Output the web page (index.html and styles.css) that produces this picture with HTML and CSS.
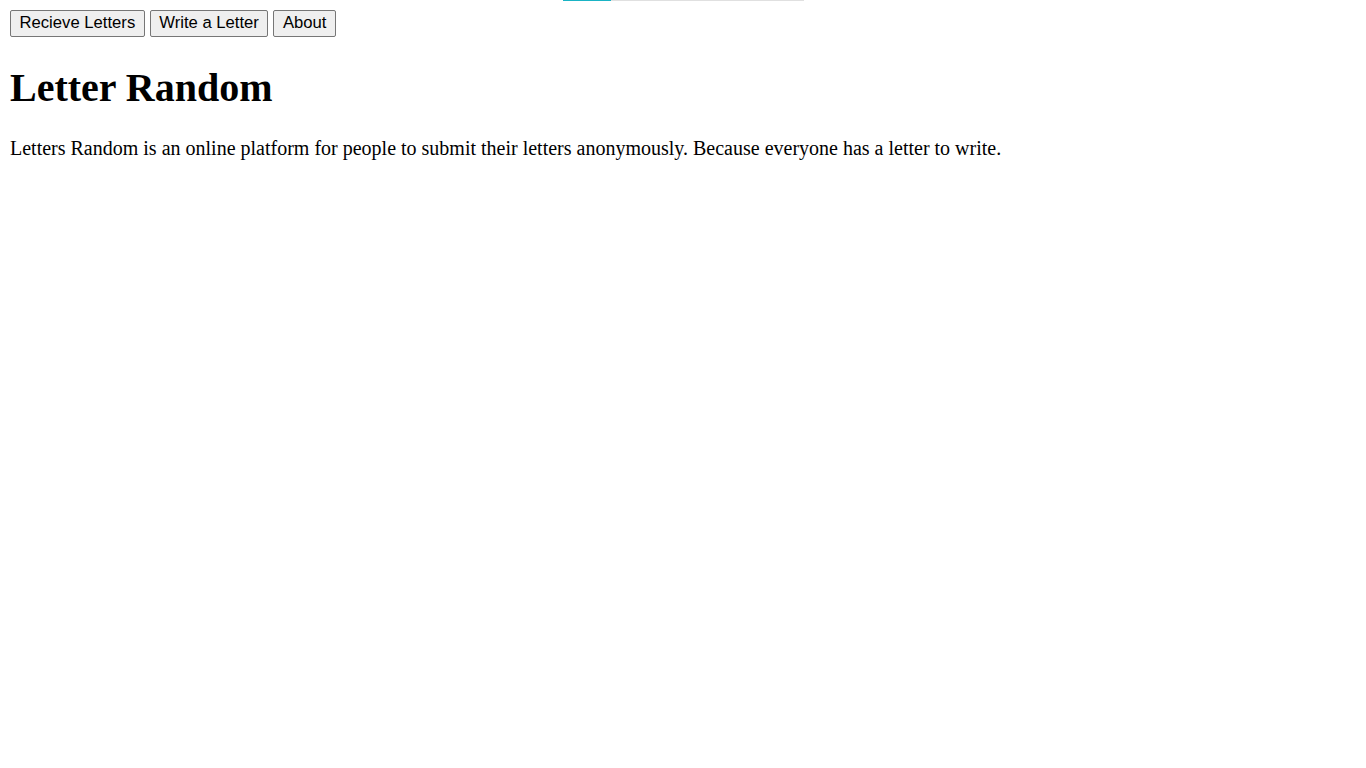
FILE: index.html
```html
<!DOCTYPE html>
<html lang="en">
<head>
<meta charset="utf-8">
<title>Letter Random</title>
<link rel="stylesheet" href="styles.css">
</head>
<body>
<div class="progress"><div class="progress-fill"></div></div>
<nav class="nav">
  <button class="btn">Recieve Letters</button>
  <button class="btn">Write a Letter</button>
  <button class="btn">About</button>
</nav>
<h1 class="title">Letter Random</h1>
<p class="intro">Letters Random is an online platform for people to submit their letters anonymously. Because everyone has a letter to write.</p>
</body>
</html>
```

FILE: styles.css
```css
html, body {
  background: #ffffff;
}
body {
  margin: 10px;
  font-family: "Liberation Serif", "Times New Roman", serif;
  font-size: 20px;
  color: #000000;
}
.progress {
  position: absolute;
  top: 0;
  left: 563px;
  width: 241px;
  height: 1px;
  background: #e0e0e0;
}
.progress-fill {
  width: 48px;
  height: 100%;
  background: #1ab3c4;
}
.nav {
  display: flex;
  gap: 5px;
}
.btn {
  font-family: "Liberation Sans", Arial, sans-serif;
  font-size: 16.67px;
  color: #000000;
  background: #efefef;
  border: 1px solid #767676;
  border-radius: 2px;
  padding: 0 8.5px 2px;
  margin: 0;
  height: 27px;
  line-height: normal;
}
.title {
  font-size: 40px;
  font-weight: bold;
  margin: 26.8px 0 26px;
}
.intro {
  margin: 19px 0 20px;
}
```
